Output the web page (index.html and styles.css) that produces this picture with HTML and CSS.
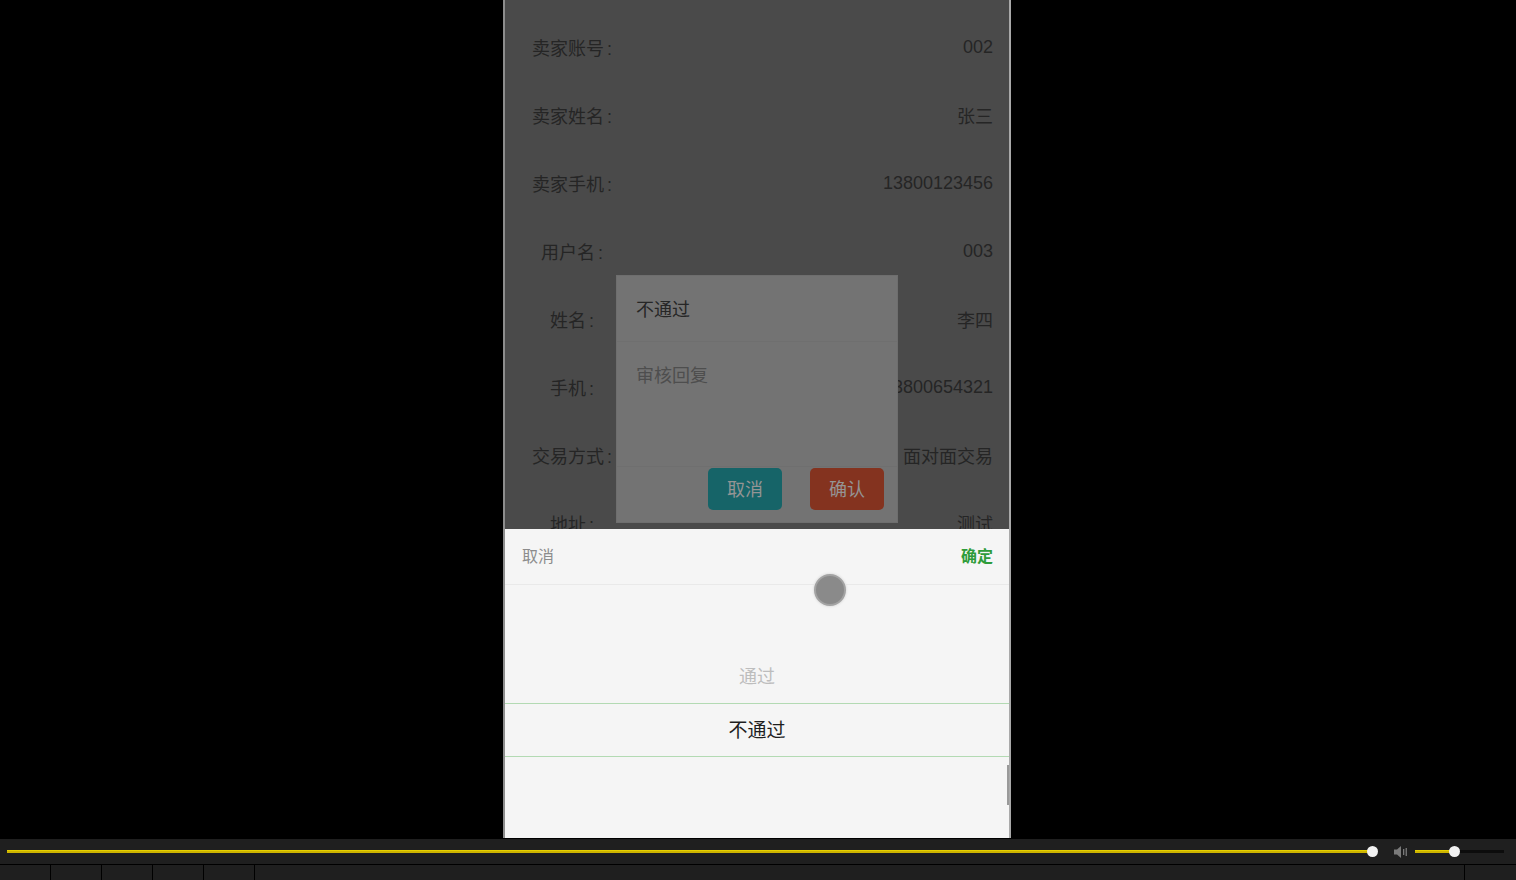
FILE: index.html
```html
<!DOCTYPE html>
<html lang="zh-CN">
<head>
<meta charset="utf-8">
<title>审核</title>
<link rel="stylesheet" href="styles.css">
</head>
<body>
<div class="stage">
  <div class="viewport">
    <div class="phone">
      <div class="list">
        <div class="row"><span class="label">卖家账号<i>:</i></span><span class="value">002</span></div>
        <div class="row"><span class="label">卖家姓名<i>:</i></span><span class="value">张三</span></div>
        <div class="row"><span class="label">卖家手机<i>:</i></span><span class="value">13800123456</span></div>
        <div class="row"><span class="label">用户名<i>:</i></span><span class="value">003</span></div>
        <div class="row"><span class="label">姓名<i>:</i></span><span class="value">李四</span></div>
        <div class="row"><span class="label">手机<i>:</i></span><span class="value">13800654321</span></div>
        <div class="row"><span class="label">交易方式<i>:</i></span><span class="value">面对面交易</span></div>
        <div class="row"><span class="label">地址<i>:</i></span><span class="value">测试</span></div>
      </div>

      <div class="modal">
        <div class="modal-title">不通过</div>
        <div class="modal-body">审核回复</div>
        <div class="modal-foot">
          <span class="btn btn-cancel">取消</span>
          <span class="btn btn-ok">确认</span>
        </div>
      </div>

      <div class="sheet">
        <div class="sheet-head">
          <span class="sheet-cancel">取消</span>
          <span class="sheet-ok">确定</span>
        </div>
        <div class="picker">
          <div class="pick-item dim">通过</div>
          <div class="pick-item active">不通过</div>
        </div>
        <span class="touch"></span>
        <span class="scroll-thumb"></span>
      </div>
    </div>
  </div>

  <div class="player">
    <div class="seek-row">
      <div class="seek">
        <span class="seek-fill"></span>
        <span class="knob"></span>
      </div>
      <svg class="vol-icon" width="16" height="14" viewBox="0 0 16 14">
        <path d="M1 4.5h3l4-3.5v12l-4-3.5H1z" fill="#7a7a7a"/>
        <rect x="10" y="4" width="1.3" height="6" fill="#7a7a7a"/>
        <rect x="12.6" y="3" width="1.3" height="8" fill="#7a7a7a"/>
      </svg>
      <div class="vol">
        <span class="vol-fill"></span>
        <span class="knob"></span>
        <span class="vol-rest"></span>
      </div>
    </div>
    <div class="tool-row">
      <span class="seg"></span><span class="seg"></span><span class="seg"></span><span class="seg"></span><span class="seg"></span>
      <span class="seg wide"></span>
      <span class="seg last"></span>
    </div>
  </div>
</div>
</body>
</html>
```

FILE: styles.css
```css
* { box-sizing: border-box; }

html, body {
  margin: 0;
  padding: 0;
  background: #000;
  height: 880px;
  overflow: hidden;
  font-family: "Liberation Sans", "Noto Sans CJK SC", sans-serif;
}

.stage {
  display: flex;
  flex-direction: column;
  height: 880px;
}

.viewport {
  height: 838px;
  display: flex;
}

.phone {
  position: relative;
  margin-left: 503px;
  width: 508px;
  height: 838px;
  background: #4a4a4a;
  border-left: 2px solid #8d8d8d;
  border-right: 2px solid #a9a9a9;
  overflow: hidden;
}

.list {
  padding-top: 13px;
}

.row {
  height: 68px;
  display: flex;
  align-items: center;
  justify-content: space-between;
  padding: 0 16px 0 10px;
  font-size: 18px;
  color: #252525;
}

.label {
  width: 114px;
  text-align: center;
}

.label i {
  font-style: normal;
  margin-left: 3px;
}

.value {
  text-align: right;
}

/* dialog */
.modal {
  position: absolute;
  left: 111px;
  top: 275px;
  width: 282px;
  height: 248px;
  background: #737373;
  border: 1px solid #6e6e6e;
  display: flex;
  flex-direction: column;
}

.modal-title {
  height: 66px;
  padding: 0 19px 2px;
  display: flex;
  align-items: center;
  font-size: 18px;
  color: #262626;
  border-bottom: 1px solid #6f6f6f;
}

.modal-body {
  height: 125px;
  padding: 19px 19px 0;
  font-size: 18px;
  color: #4e4e4e;
  border-bottom: 1px solid #6f6f6f;
}

.modal-foot {
  flex: 1;
  display: flex;
  justify-content: flex-end;
  align-items: flex-start;
  gap: 28px;
  padding: 1px 13px 0 0;
}

.btn {
  width: 74px;
  height: 42px;
  border-radius: 5px;
  display: flex;
  align-items: center;
  justify-content: center;
  padding-bottom: 3px;
  font-size: 18px;
  color: #949494;
}

.btn-cancel { background: #166468; }
.btn-ok { background: #84331f; }

/* bottom picker sheet */
.sheet {
  position: absolute;
  left: 0;
  right: 0;
  top: 529px;
  bottom: 0;
  background: #f5f5f5;
}

.sheet-head {
  height: 56px;
  display: flex;
  align-items: center;
  justify-content: space-between;
  padding: 0 16px 3px 17px;
  font-size: 16px;
  border-bottom: 1px solid #e9e9e9;
}

.sheet-cancel { color: #8c8c8c; }
.sheet-ok { color: #2e9c3a; font-weight: bold; }

.picker {
  padding-top: 64px;
}

.pick-item {
  height: 54px;
  display: flex;
  align-items: center;
  justify-content: center;
}

.pick-item.dim {
  font-size: 18px;
  color: #bdbdbd;
  padding-bottom: 2px;
}

.pick-item.active {
  font-size: 19px;
  color: #1e1e1e;
  padding-bottom: 4px;
  border-top: 1px solid #b3dab3;
  border-bottom: 1px solid #b3dab3;
}

.touch {
  position: absolute;
  left: 309px;
  top: 45px;
  width: 32px;
  height: 32px;
  border-radius: 50%;
  background: #8a8a8a;
  border: 2px solid #a3a3a3;
  box-shadow: 0 0 2px 1px #e2e2e2;
}

.scroll-thumb {
  position: absolute;
  right: 0;
  top: 236px;
  width: 2px;
  height: 40px;
  background: #9a9a9a;
}

/* player controls */
.player {
  height: 42px;
  background: #1f1f1f;
  border-top: 1px solid #000;
  display: flex;
  flex-direction: column;
}

.seek-row {
  height: 26px;
  display: flex;
  align-items: center;
  padding-left: 7px;
  border-bottom: 1px solid #000;
}

.seek {
  position: relative;
  width: 1371px;
  height: 3px;
  display: flex;
  align-items: center;
}

.seek-fill {
  flex: 1;
  height: 3px;
  background: #cdb400;
  border-top: 1px solid #e6d000;
}

.knob {
  width: 11px;
  height: 11px;
  border-radius: 50%;
  background: #f2f2f2;
  margin-left: -5px;
  flex: none;
}

.vol-icon {
  margin-left: 15px;
  flex: none;
}

.vol {
  margin-left: 6px;
  width: 89px;
  display: flex;
  align-items: center;
}

.vol-fill {
  width: 39px;
  height: 3px;
  background: #cdb400;
  border-top: 1px solid #e6d000;
}

.vol-rest {
  flex: 1;
  height: 3px;
  background: #0c0c0c;
  margin-left: -5px;
}

.vol .knob {
  position: relative;
  z-index: 1;
}

.tool-row {
  flex: 1;
  display: flex;
}

.seg {
  width: 51px;
  border-right: 1px solid #000;
}

.seg.wide {
  width: 1210px;
}

.seg.last {
  flex: 1;
  border-right: none;
}
```
